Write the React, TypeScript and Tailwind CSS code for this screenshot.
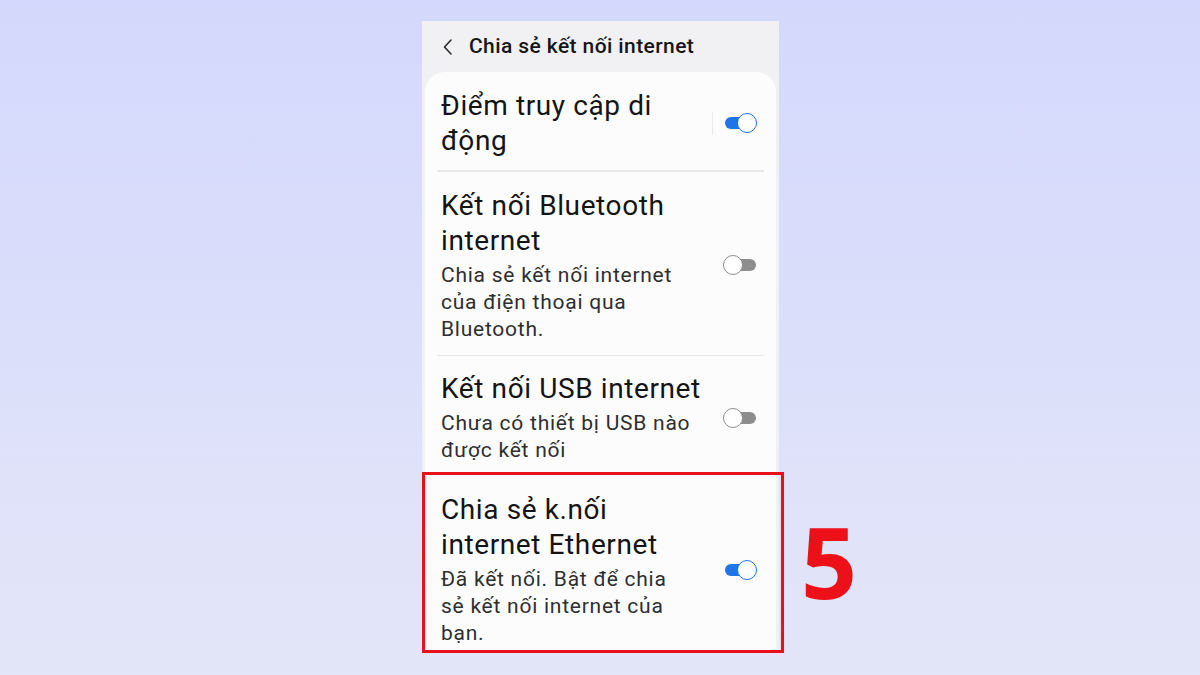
import React from "react";

const font = { fontFamily: "Roboto, 'Noto Sans', 'Liberation Sans', sans-serif" };

function Toggle({ on }: { on: boolean }) {
  return (
    <div className="relative w-[34px] h-[20px] shrink-0">
      <div
        className={
          "absolute left-[2px] right-[1px] top-[4px] h-[12px] rounded-full " +
          (on ? "bg-[#1f74e8]" : "bg-[#8d8d8d]")
        }
      />
      <div
        className={
          "absolute top-0 w-[20px] h-[20px] rounded-full bg-white border-[1.5px] " +
          (on ? "right-0 border-[#1f74e8]" : "left-0 border-[#8d8d8d]")
        }
      />
    </div>
  );
}

function Row({
  title,
  sub,
  on,
  divider,
  className = "",
  sep,
}: {
  title: string[];
  sub?: string[];
  on: boolean;
  divider?: boolean;
  className?: string;
  sep?: boolean;
}) {
  return (
    <div className={"relative " + className}>
      <div className="flex items-center pl-[16px] pr-[19px]">
        <div className="flex-1 min-w-0">
          <div className="text-[28px] leading-[35px] tracking-[0.6px] text-[#141414]">
            {title.map((t, i) => (
              <div key={i} className="whitespace-nowrap">
                {t}
              </div>
            ))}
          </div>
          {sub && (
            <div className="mt-[4px] text-[21px] leading-[27px] tracking-[0.75px] text-[#2e2e2e]">
              {sub.map((t, i) => (
                <div key={i} className="whitespace-nowrap">
                  {t}
                </div>
              ))}
            </div>
          )}
        </div>
        {sep && <div className="w-px h-[23px] bg-[#e9e9ec] mr-[10px]" />}
        <Toggle on={on} />
      </div>
      {divider && <div className="mx-[12px] mt-[12px] h-[1.5px] bg-[#e8e8ea]" />}
    </div>
  );
}

export default function App() {
  return (
    <div
      className="w-[1200px] h-[675px] overflow-hidden bg-gradient-to-b from-[#d4d8fc] to-[#e3e6f8] flex items-start"
      style={font}
    >
      <div className="ml-[422px] mt-[21px] w-[357px] h-[631px] bg-[#f1f1f4] flex flex-col">
        {/* app bar */}
        <div className="h-[51px] flex items-center pl-[20px]">
          <svg width="12" height="18" viewBox="0 0 12 18" className="mr-[15px]">
            <path d="M9 2 L2.5 9 L9 16" fill="none" stroke="#2a2a2a" strokeWidth="1.6" strokeLinecap="round" strokeLinejoin="round" />
          </svg>
          <span className="text-[21px] font-medium text-[#161616] tracking-[0.4px]">
            Chia sẻ kết nối internet
          </span>
        </div>

        {/* settings card */}
        <div className="mx-[3px] flex-1 bg-[#fcfcfd] rounded-t-[20px] pt-[16px] relative">
          <Row title={["Điểm truy cập di", "động"]} on divider sep />
          <Row
            className="pt-[16px]"
            title={["Kết nối Bluetooth", "internet"]}
            sub={["Chia sẻ kết nối internet", "của điện thoại qua", "Bluetooth."]}
            on={false}
            divider
          />
          <Row
            className="pt-[15px]"
            title={["Kết nối USB internet"]}
            sub={["Chưa có thiết bị USB nào", "được kết nối"]}
            on={false}
          />
          <div className="relative mt-[8px]">
            <Row
              className="pt-[20px]"
              title={["Chia sẻ k.nối", "internet Ethernet"]}
              sub={["Đã kết nối. Bật để chia", "sẻ kết nối internet của", "bạn."]}
              on
            />
            {/* highlight frame around the Ethernet option */}
            <div className="absolute left-[-3px] right-[-8px] top-0 h-[181px] border-[3px] border-[#e8101c]" />
          </div>
        </div>
      </div>
      <div
        className="ml-[22px] mt-[512px] text-[98px] leading-none font-bold text-[#ec1018]"
        style={{ fontFamily: "'Open Sans', 'Liberation Sans', sans-serif" }}
      >
        5
      </div>
    </div>
  );
}
